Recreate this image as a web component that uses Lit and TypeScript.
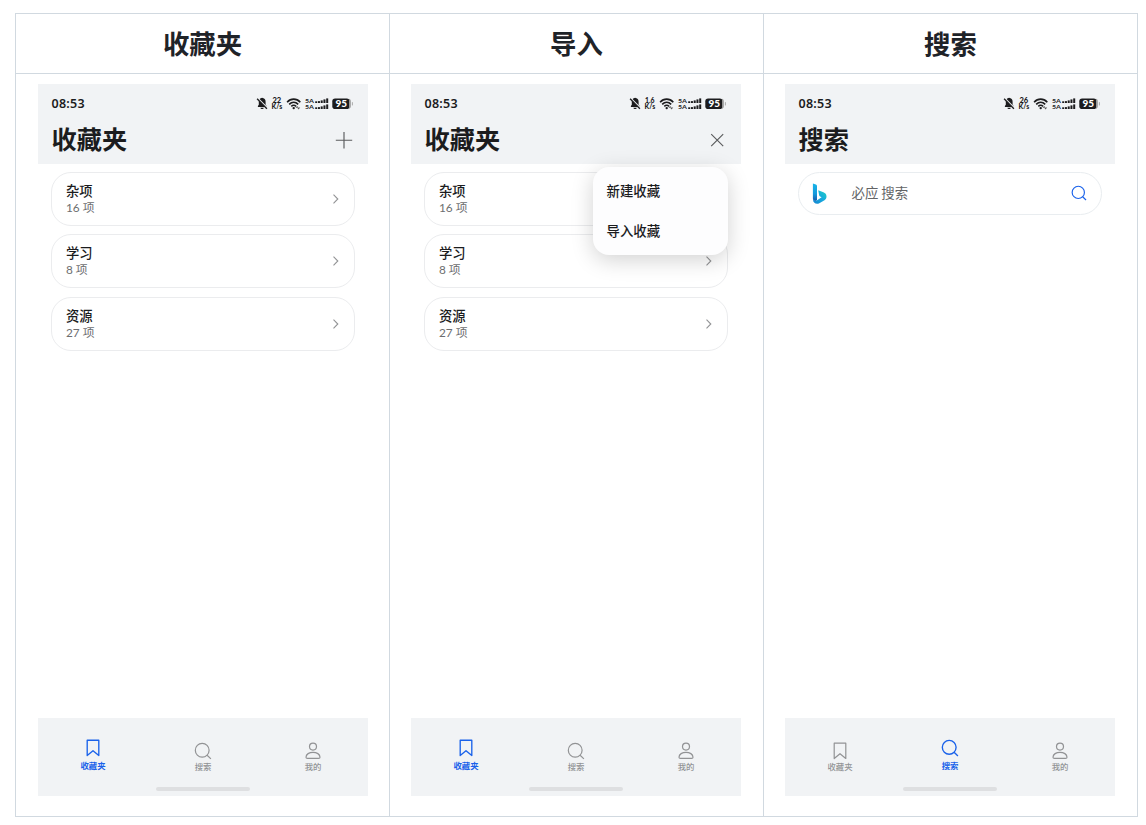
import { LitElement, html, svg, css, nothing } from "lit";
import { customElement, property } from "lit/decorators.js";

const bookmarkIcon = svg`<path d="M3.2 1.2h11.6v15.3L9 11.7l-5.8 4.8z" stroke-linejoin="round"/>`;
const searchIcon = svg`<circle cx="8.2" cy="8.3" r="6.9"/><path d="M13.1 13.2l3.8 3.7"/>`;
const personIcon = svg`<circle cx="9" cy="4.6" r="3.5"/><path d="M3.4 16.4h11.2c.9 0 1.4-.5 1.4-1.2 0-3-3.3-4.9-7-4.9s-7 1.9-7 4.9c0 .7.5 1.2 1.4 1.2z"/>`;

@customElement("status-icons")
class StatusIcons extends LitElement {
  @property() speed = "22";
  static styles = css`
    :host { display: block; }
    svg { display: block; font-family: Lato, Inter, sans-serif; }
  `;
  render() {
    const bars = [0, 1, 2, 3, 4];
    const signal = (base: number) =>
      bars.map((i) => {
        const h = [1.7, 1.9, 2.6, 3.6, 4.6][i];
        return svg`<rect x=${60.2 + i * 2.75} y=${base - h} width="2" height=${h}/>`;
      });
    const speedWidth = this.speed.includes(".") ? 9.6 : 8.8;
    return html`<svg width="100" height="16" viewBox="0 0 100 16" fill="#1c1c1e">
      <path d="M6.4 2.1l.7-.3.7.3c1.9.4 2.8 1.8 2.8 3.6v3l1 1.4v1H3l-.1-.1v-.9l.9-1.4v-3c0-1.9.8-3.2 2.6-3.6zM5.4 11.7h3.4c-.2 1-.9 1.4-1.7 1.4s-1.5-.4-1.7-1.4z"/>
      <path d="M2.7 2.2l9.7 9.9" stroke="#f1f3f5" stroke-width="1.6"/>
      <path d="M2.1 2.8l9.8 10" stroke="#1c1c1e" stroke-width="1.3"/>
      <text x=${21.8 - speedWidth / 2} y="6.8" font-size="6.6" font-weight="900" textLength=${speedWidth} lengthAdjust="spacingAndGlyphs">${this.speed}</text>
      <text x="16.6" y="13.1" font-size="6.8" font-weight="900" textLength="10.6" lengthAdjust="spacingAndGlyphs">K/s</text>
      <g fill="none" stroke="#1c1c1e" stroke-width="1.6">
        <path d="M32.1 6.2c3.8-4.1 9.4-4.1 13.2 0"/>
        <path d="M34.2 8.4c2.7-2.7 6.3-2.7 9 0"/>
        <path d="M36.3 10.4c1.4-1.3 3.4-1.3 4.8 0"/>
      </g>
      <circle cx="38.7" cy="12.1" r="1.2"/>
      <path d="M42.1 10.1l1.6 1.6h-3.2zM43.6 13.4l1.6-1.8h-3.2z" fill="#555"/>
      <text x="50" y="6.8" font-size="6.3" font-weight="700" textLength="9" lengthAdjust="spacingAndGlyphs">5A</text>
      <text x="50" y="13" font-size="6.3" font-weight="700" textLength="9" lengthAdjust="spacingAndGlyphs">5A</text>
      ${signal(7)}${signal(13)}
      <rect x="77.3" y="2.5" width="17.3" height="10.6" rx="2.8"/>
      <path d="M94 2.8c1.4.5 1.8 1.4 1.8 2.8v4.5c0 1.4-.5 2.3-1.8 2.8z" fill="#999"/>
      <path d="M97.4 6.2v3.2" stroke="#aaa" stroke-width="1"/>
      <text x="80.4" y="11.2" font-size="9.8" font-weight="900" fill="#fff" textLength="11.6" lengthAdjust="spacingAndGlyphs">95</text>
    </svg>`;
  }
}

@customElement("phone-screen")
class PhoneScreen extends LitElement {
  @property() title = "";
  @property() speed = "22";
  @property() active = "fav";
  @property({ type: Boolean }) menu = false;

  static styles = css`
    * { box-sizing: border-box; }
    :host {
      display: flex; flex-direction: column; position: relative;
      width: 330px; height: 712px; background: #fff; color: #1b1c1e;
      font-family: "Noto Sans CJK SC", sans-serif;
    }
    header { height: 80px; background: #f1f3f5; padding: 12px 14px 0 13.5px; }
    .status { display: flex; justify-content: space-between; height: 16px; align-items: center; }
    .time { font: 600 12.5px/16px "Noto Sans", sans-serif; letter-spacing: .25px; }
    .status status-icons { margin-right: -1px; }
    .bar { display: flex; justify-content: space-between; align-items: flex-start; height: 36px; margin-top: 8px; }
    h2 { margin: 0; font-size: 25.2px; line-height: 36px; font-weight: 700; }
    .action { display: block; width: 18px; height: 18px; margin: 11px 1px 0 0; }
    svg { fill: none; }
    main { flex: 1; padding: 8px 13px 0; display: flex; flex-direction: column; gap: 8.3px; }
    .card {
      height: 54px; width: 304px; border: 1px solid #ebecee; border-radius: 20px;
      display: flex; align-items: center; justify-content: space-between; padding: 0 14px;
    }
    .name { font-size: 13.3px; line-height: 16px; padding-bottom: 1px; font-weight: 500; }
    .count { font-size: 11.8px; line-height: 16px; color: #6d6e70; font-family: Lato, "Noto Sans CJK SC", sans-serif; }
    .text { margin-top: 1px; }
    .chevron { display: block; }
    .search { height: 43px; width: 304px; border-radius: 22px; border: 1px solid #e9edf0; display: flex; align-items: center; padding: 0 14px 0 12.5px; }
    .query { flex: 1; margin: -3px 0 0 25px; font-size: 13.4px; line-height: 18px; color: #626365; }
    .glass { margin-top: -1px; }
    .menu {
      position: absolute; left: 182px; top: 83px; width: 135px; height: 88px;
      border-radius: 16px; background: #fdfdfe; padding: 3px 13.5px;
      box-shadow: 0 5px 22px rgba(0,0,0,.18);
      font-size: 13.4px; font-weight: 500; line-height: 40px;
    }
    nav { height: 78px; background: #f1f3f5; display: grid; grid-template: 71px / repeat(3, 1fr); position: relative; }
    .tab { display: flex; flex-direction: column; align-items: center; padding-top: 24px; color: #929395; font-size: 8.4px; line-height: 12px; font-weight: 500; }
    .tab svg { stroke: currentColor; stroke-width: 1.2; }
    .tab.on { color: #1a62ea; padding-top: 21px; font-weight: 700; }
    .tab.on svg { margin-bottom: 2px; stroke-width: 1.35; }
    .handle { position: absolute; left: 118px; top: 68.5px; width: 94px; height: 4px; border-radius: 2px; background: #dedfe1; }
  `;

  private card(name: string, count: number) {
    return html`<div class="card">
      <div class="text"><div class="name">${name}</div><div class="count">${count} 项</div></div>
      <svg class="chevron" width="8" height="12" viewBox="0 0 8 12" stroke="#929395" stroke-width="1.1"><path d="M1.5 1.7L5.8 6 1.5 10.3"/></svg>
    </div>`;
  }

  private tab(id: string, label: string, icon: unknown) {
    return html`<div class="tab ${this.active === id ? "on" : ""}">
      <svg width="18" height="18" viewBox="0 0 18 18">${icon}</svg><span>${label}</span>
    </div>`;
  }

  render() {
    const searching = this.active === "search";
    return html`
      <header>
        <div class="status"><span class="time">08:53</span><status-icons .speed=${this.speed}></status-icons></div>
        <div class="bar"><h2>${this.title}</h2>
          ${searching ? nothing : html`<svg class="action" viewBox="0 0 18 18" stroke="#5b5c5e" stroke-width="1.15">
            <path d=${this.menu ? "M3.2 3.2l12 12M15.2 3.2l-12 12" : "M9 1v16.4M.8 9.2h16.4"}/></svg>`}
        </div>
      </header>
      <main>
        ${searching
          ? html`<div class="search">
              <svg width="15" height="21" viewBox="0 0 15 21">
                <defs>
                  <linearGradient id="stem" x1="0" y1="0" x2="0" y2="1"><stop stop-color="#18b5e8"/><stop offset=".6" stop-color="#1499dc"/><stop offset="1" stop-color="#165aad"/></linearGradient>
                  <linearGradient id="bowl" x1="0" y1="1" x2="1" y2="0"><stop stop-color="#1684d0"/><stop offset=".5" stop-color="#16a9de"/><stop offset="1" stop-color="#20d0c4"/></linearGradient>
                </defs>
                <path fill="url(#stem)" d="M.9.4l3 1.2c.7.3 1.1.8 1.1 1.6v14c-1.5 1.2-4.1.9-4.1-1.6z"/>
                <path fill="url(#bowl)" d="M6.2 7.3l5.2 1.9c1.9.7 3.1 2.1 3.1 4.2 0 1.8-.8 3-2 3.8l-5.2 3c-3 1.6-6.4-.4-6.4-3.7 1 1.5 2.8 1.6 4.2.7l4.5-2.9-1.5-.8c-.5-.3-.7-.5-.9-1z"/>
              </svg>
              <span class="query">必应 搜索</span>
              <svg class="glass" width="16" height="16" viewBox="0 0 18 18" stroke="#1a62ea" stroke-width="1.3">${searchIcon}</svg>
            </div>`
          : [this.card("杂项", 16), this.card("学习", 8), this.card("资源", 27)]}
      </main>
      ${this.menu ? html`<div class="menu"><div>新建收藏</div><div>导入收藏</div></div>` : nothing}
      <nav>
        ${this.tab("fav", "收藏夹", bookmarkIcon)}
        ${this.tab("search", "搜索", searchIcon)}
        ${this.tab("me", "我的", personIcon)}
        <div class="handle"></div>
      </nav>`;
  }
}

@customElement("app-root")
class AppRoot extends LitElement {
  static styles = css`
    * { box-sizing: border-box; }
    :host { display: block; height: 825px; background: #fff; padding: 13px 0 0 15px; overflow: hidden; }
    .table {
      display: grid; grid-template: 61px 743px / 375px 374px 374px; width: 1123px;
      font-family: "Noto Sans CJK SC", sans-serif;
    }
    .head, .cell { border: solid #d1d9e0; border-width: 0 1px 1px 0; }
    .head { border-top-width: 1px; font-size: 26.4px; font-weight: 600; color: #1f2328; display: flex; align-items: center; justify-content: center; line-height: 38px; padding-bottom: 2px; }
    .first { border-left-width: 1px; }
    .cell { padding: 10px 0 0 21px; }
    .cell.first { padding-left: 22px; }
  `;
  render() {
    return html`<div class="table">
      <div class="head first">收藏夹</div><div class="head">导入</div><div class="head">搜索</div>
      <div class="cell first"><phone-screen .title=${"收藏夹"} speed="22"></phone-screen></div>
      <div class="cell"><phone-screen .title=${"收藏夹"} speed="1.6" menu></phone-screen></div>
      <div class="cell"><phone-screen .title=${"搜索"} speed="26" active="search"></phone-screen></div>
    </div>`;
  }
}
